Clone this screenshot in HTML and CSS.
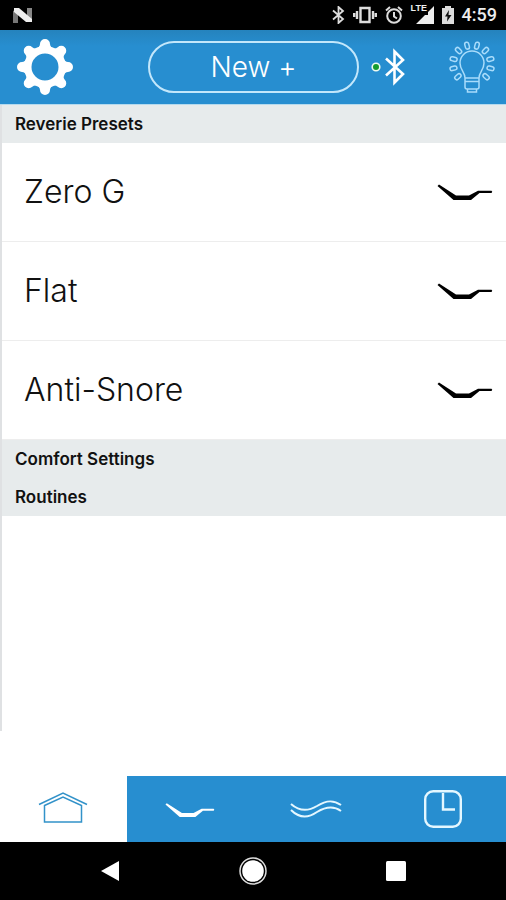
FILE: index.html
```html
<!DOCTYPE html>
<html lang="en">
<head>
<meta charset="utf-8">
<meta name="viewport" content="width=device-width, initial-scale=1">
<title>Reverie Presets</title>
<link rel="stylesheet" href="styles.css">
</head>
<body>
<svg width="0" height="0" class="defs" aria-hidden="true">
  <defs>
    <symbol id="bed" viewBox="0 -3 56 20">
      <path d="M.5 2L2 .5L19 11.500H32L41 6.800H54.500Q56 7.900 54.500 9H42.500L34 16H16.500Z"/>
    </symbol>
  </defs>
</svg>
<div class="app">
  <div class="status">
    <svg class="n-logo" width="20" height="17" viewBox="0 0 20 17" aria-hidden="true">
      <path d="M0 4L5 1V16H0Z" fill="#777"/><path d="M14 1H19V13L14 10Z" fill="#888"/>
      <path d="M1 1H6L19 12V15H13L1 5Z" fill="#eee"/>
    </svg>
    <div class="status-icons">
      <svg width="13" height="18" viewBox="0 0 13 18" fill="none" stroke="#ddd" stroke-width="1.800" aria-hidden="true"><path d="M1 4.500L11 13L6.500 17V1L11 5L1 13.500"/></svg>
      <svg width="24" height="18" viewBox="0 0 24 18" fill="none" stroke="#ddd" stroke-width="2.400" aria-hidden="true"><path d="M7.500 2H16.500V16H7.500ZM4 5V13M20 5V13M1.200 7V11M22.800 7V11"/></svg>
      <svg width="18" height="18" viewBox="0 0 18 18" fill="none" stroke="#ddd" stroke-width="2" aria-hidden="true"><circle cx="9" cy="10" r="6.800"/><path d="M1 4.500L5 1M13 1L17 4.500M9 6V10.500L12 12.500"/></svg>
      <div class="signal">
        <span class="lte">LTE</span>
        <svg width="23" height="18" viewBox="0 0 23 18" aria-hidden="true"><path d="M5 18L14 9H17V6L23 0V18Z" fill="#eee"/></svg>
      </div>
      <svg width="12" height="18" viewBox="0 0 12 18" aria-hidden="true"><path d="M0 2H3V0H9V2H12V18H0Z" fill="#ddd"/><path d="M7 4L3 10.500H5.500L5 15.500L9.500 9H6.500Z" fill="#111"/></svg>
    </div>
    <time class="clock">4:59</time>
  </div>
  <header class="header">
    <button class="icon-btn" aria-label="Settings">
      <svg width="56" height="56" viewBox="-28 -28 56 56" fill="#fff">
        <circle r="17.200" fill="none" stroke="#fff" stroke-width="7.400"/>
        <path id="t" d="M-10 -17Q-5 -20 -5 -23A5 5 0 0 1 5 -23Q5 -20 10 -17L5 -15H-5Z"/>
        <use href="#t" transform="rotate(45)"/><use href="#t" transform="rotate(90)"/><use href="#t" transform="rotate(135)"/><use href="#t" transform="rotate(180)"/><use href="#t" transform="rotate(225)"/><use href="#t" transform="rotate(270)"/><use href="#t" transform="rotate(315)"/>
      </svg>
    </button>
    <button class="new-btn">New +</button>
    <button class="icon-btn bluetooth" aria-label="Bluetooth connected">
      <svg width="34" height="38" viewBox="0 0 34 38" fill="none">
        <circle cx="5" cy="19" r="3.800" fill="#169c2e" stroke="#eefbf0" stroke-width="1.600"/>
        <path d="M15 10.500L32 26L23.500 34.500V3.500L32 12L15 27.500" stroke="#fff" stroke-width="2.600"/>
      </svg>
    </button>
    <button class="icon-btn" aria-label="Light">
      <svg width="48" height="54" viewBox="0 0 48 54" fill="none" stroke="#a9dcfb" stroke-width="1.500">
        <path d="M17 38C17 32 12 30 12 23A12 12 0 0 1 36 23C36 30 31 32 31 38ZM17 38H31V47Q31 49 29 49H19Q17 49 17 47ZM17 41.500H31M19.500 49V52H28.500V49"/>
        <g transform="translate(24 24)">
          <rect id="ray" x="-2" y="-22.500" width="4" height="7" rx="2" transform="rotate(-15)"/>
          <use href="#ray" transform="rotate(30)"/><use href="#ray" transform="rotate(60)"/><use href="#ray" transform="rotate(90)"/><use href="#ray" transform="rotate(118)"/><use href="#ray" transform="rotate(147)"/>
          <use href="#ray" transform="rotate(-30)"/><use href="#ray" transform="rotate(-60)"/><use href="#ray" transform="rotate(-88)"/><use href="#ray" transform="rotate(-117)"/>
        </g>
      </svg>
    </button>
  </header>
  <main class="content">
    <h2 class="section">Reverie Presets</h2>
    <ul class="presets">
      <li><button class="preset">Zero G<svg class="bed" width="56" height="20"><use href="#bed"/></svg></button></li>
      <li><button class="preset">Flat<svg class="bed" width="56" height="20"><use href="#bed"/></svg></button></li>
      <li><button class="preset">Anti-Snore<svg class="bed" width="56" height="20"><use href="#bed"/></svg></button></li>
    </ul>
    <h2 class="section">Comfort Settings</h2>
    <h2 class="section">Routines</h2>
  </main>
  <nav class="tabs" aria-label="Main">
    <a class="tab active" href="#home" aria-label="Home">
      <svg width="50" height="34" viewBox="0 0 50 34" fill="none" stroke="#3292c9" stroke-width="1.500"><path d="M1 12.500L25 1L49 12.500M6.500 13.500L25 5L43.500 13.500V30H6.500Z"/></svg>
    </a>
    <a class="tab" href="#position" aria-label="Position">
      <svg width="50" height="18" fill="#fff"><use href="#bed"/></svg>
    </a>
    <a class="tab" href="#massage" aria-label="Massage">
      <svg width="52" height="22" viewBox="0 -1 52 22" fill="none" stroke="#e4f7ff" stroke-width="2"><path d="M1 5C9 12 17 13 27 7C37 .5 44 1 51 6M1 11C9 19 17 20 27 13C37 7 44 7 51 12"/></svg>
    </a>
    <a class="tab" href="#alarm" aria-label="Alarm">
      <svg width="38" height="38" viewBox="0 0 38 38" fill="none" stroke="#e4f7ff" stroke-width="2.400"><rect x="1.200" y="1.200" width="35.600" height="35.600" rx="8"/><path d="M19 3V19.500H31"/></svg>
    </a>
  </nav>
  <div class="system">
    <button class="icon-btn" aria-label="Back"><svg width="20" height="22" viewBox="0 0 20 22"><path d="M1 11L19 1V21Z" fill="#fff"/></svg></button>
    <button class="icon-btn" aria-label="Home screen"><svg width="28" height="28" viewBox="0 0 28 28"><circle cx="14" cy="14" r="13" fill="none" stroke="#ddd" stroke-width="1.500"/><circle cx="14" cy="14" r="10.800" fill="#fff"/></svg></button>
    <button class="icon-btn" aria-label="Recent apps"><svg width="20" height="20" viewBox="0 0 20 20"><rect width="20" height="20" rx="1.500" fill="#fff"/></svg></button>
  </div>
</div>
</body>
</html>
```
FILE: styles.css
```css
* {
  box-sizing: border-box;
}

body {
  margin: 0;
  background: #fff;
  color: #111;
  font-family: Inter, "Liberation Sans", sans-serif;
}

svg {
  display: block;
  flex: none;
}

button {
  font: inherit;
  color: inherit;
  border: 0;
  padding: 0;
  background: none;
}

.defs {
  position: absolute;
}

.app {
  display: flex;
  flex-direction: column;
  min-height: 100vh;
}

.status {
  display: flex;
  align-items: center;
  height: 30px;
  padding: 0 9px 0 13px;
  background: #000;
  color: #eee;
}

.status-icons {
  display: flex;
  align-items: center;
  gap: 8px;
  margin-left: auto;
}

.signal {
  position: relative;
}

.lte {
  position: absolute;
  top: -2px;
  left: 0;
  font: 700 9px/9px "Liberation Sans", sans-serif;
}

.clock {
  margin-left: 8px;
  font: 500 18px/32px Roboto, sans-serif;
}

.header {
  display: flex;
  align-items: center;
  height: 75px;
  padding: 0 10px 0 17px;
  background: linear-gradient(#2583bd, #278ed0 16px);
  border-bottom: 1px solid #b5daee;
}

.new-btn {
  flex: 1;
  height: 52px;
  margin: 0 12px 0 75px;
  border: 2px solid #c3e7fb;
  border-radius: 26px;
  color: #fff;
  font-size: 28px;
  font-weight: 300;
  line-height: 48px;
}

.bluetooth {
  margin-right: 43px;
}

.content {
  flex: 1;
  margin-bottom: 45px;
  border-left: 2px solid #dfe1e3;
}

.section {
  height: 38px;
  margin: 0;
  padding-left: 13px;
  background: #e7ebec;
  font-size: 17px;
  font-weight: 600;
  line-height: 38px;
}

.presets {
  margin: 0;
  padding: 0;
  list-style: none;
}

.presets li {
  border-bottom: 1px solid #ededed;
}

.preset {
  display: flex;
  align-items: center;
  justify-content: space-between;
  width: 100%;
  height: 98px;
  padding: 0 13px 2px 22px;
  font-size: 32px;
  font-weight: 300;
}

.tabs {
  display: grid;
  grid-template-columns: repeat(4, 1fr);
  height: 66px;
  background: #278ed0;
}

.tab {
  display: flex;
  align-items: center;
  justify-content: center;
}

.active {
  background: #fff;
}

.system {
  display: flex;
  align-items: center;
  justify-content: space-between;
  height: 58px;
  padding: 0 100px;
  background: #000;
}
```
